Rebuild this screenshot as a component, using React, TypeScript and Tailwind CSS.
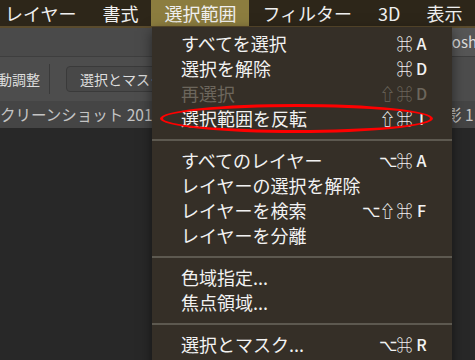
type Item = { label: string; keys?: string[]; disabled?: boolean } | 'sep';

const menuTitles = ['レイヤー', '書式', '選択範囲', 'フィルター', '3D', '表示'];

const items: Item[] = [
  { label: 'すべてを選択', keys: ['⌘', 'A'] },
  { label: '選択を解除', keys: ['⌘', 'D'] },
  { label: '再選択', keys: ['⇧', '⌘', 'D'], disabled: true },
  { label: '選択範囲を反転', keys: ['⇧', '⌘', 'I'] },
  'sep',
  { label: 'すべてのレイヤー', keys: ['⌥', '⌘', 'A'] },
  { label: 'レイヤーの選択を解除' },
  { label: 'レイヤーを検索', keys: ['⌥', '⇧', '⌘', 'F'] },
  { label: 'レイヤーを分離' },
  'sep',
  { label: '色域指定...' },
  { label: '焦点領域...' },
  'sep',
  { label: '選択とマスク...', keys: ['⌥', '⌘', 'R'] },
  { label: '選択範囲を変更' },
];

const jp = { fontFamily: '"Noto Sans CJK JP", "DejaVu Sans", sans-serif' };

function SelectMenu() {
  return (
    <div className="absolute left-[152px] top-[27px] w-[300px] bg-[#352f27] pt-[3px] pb-[6px] shadow-[0_4px_12px_rgba(0,0,0,0.5)]">
      {items.map((it, i) =>
        it === 'sep' ? (
          <div key={i} className="h-[17px] pt-[9px]">
            <div className="h-[2px] bg-[#5d5950]" />
          </div>
        ) : (
          <div
            key={i}
            className={`flex h-[25px] items-center pl-[29px] pr-[22px] text-[18px] leading-none ${
              it.disabled ? 'text-[#6c665c]' : 'text-[#f2f2f2]'
            }`}
          >
            <span className="whitespace-nowrap">{it.label}</span>
            {it.keys && (
              <span className="ml-auto flex font-medium">
                {it.keys.map((k, j) => (
                  <span key={j} className="w-[17px] text-center text-[16px]">
                    {k}
                  </span>
                ))}
              </span>
            )}
          </div>
        )
      )}
    </div>
  );
}

export default function App() {
  return (
    <div className="relative h-[360px] w-[475px] overflow-hidden bg-[#282828]" style={jp}>
      {/* menu bar */}
      <div className="flex h-[28px] items-center border-b-2 border-[#5a4b2d] bg-[#2d2619] text-[18px] leading-none text-[#f0f0f0]">
        <div className="-ml-[8px] flex h-full">
          {menuTitles.map((t) => (
            <div
              key={t}
              className={`flex h-full items-center px-[13px] pb-[1px] whitespace-nowrap ${
                t === '選択範囲' ? 'bg-[#8c7d3f]' : ''
              }`}
            >
              {t}
            </div>
          ))}
        </div>
      </div>

      {/* app bar */}
      <div className="flex h-[29px] justify-end border-b border-[#3e3e3e] bg-[#4a4a4a]">
        <div className="flex w-[57px] items-center overflow-hidden whitespace-nowrap bg-[#565656] pl-[1px] text-[15px] text-[#dcdcdc]">
          Photoshop
        </div>
      </div>

      {/* options bar */}
      <div className="flex h-[44px] items-center bg-[#4d4d4d] text-[14px] text-[#dddddd]">
        <span className="-ml-[2px] whitespace-nowrap">動調整</span>
        <div className="ml-[9px] h-[30px] w-px bg-[#3a3a3a]" />
        <div className="ml-[16px] flex h-[26px] items-center whitespace-nowrap rounded-[4px] border border-[#3a3a3a] bg-[#484848] pl-[13px] pr-[16px]">
          選択とマスク...
        </div>
      </div>

      {/* document tabs */}
      <div className="flex h-[27px] items-center bg-[#454545] text-[15.5px] text-[#c4c4c4]">
        <span className="whitespace-nowrap">クリーンショット 2017-06-10</span>
        <div className="ml-auto w-[29px] overflow-hidden whitespace-nowrap">影 1</div>
      </div>

      <SelectMenu />

      {/* red annotation */}
      <div className="absolute left-[160px] top-[104px] h-[29px] w-[273px] rounded-[50%] border-[3px] border-[#ff0000]" />
    </div>
  );
}
